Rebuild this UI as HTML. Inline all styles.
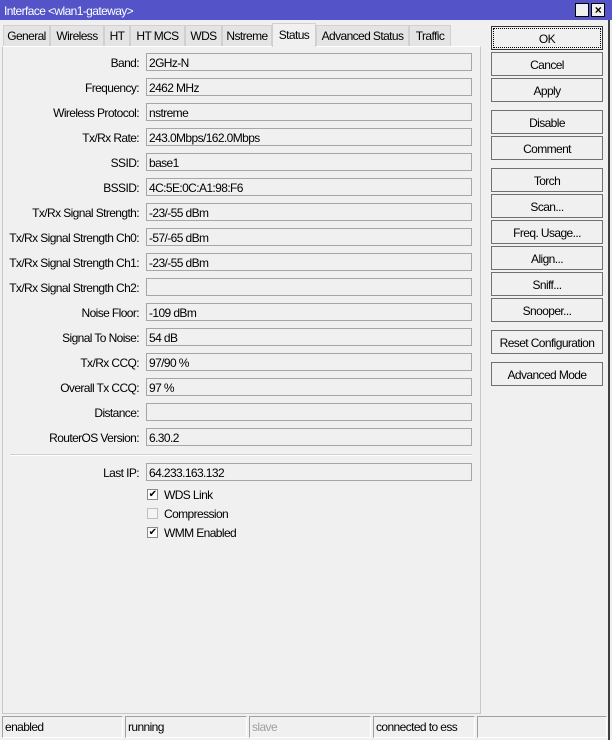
<!DOCTYPE html><html><head><style>
*{box-sizing:border-box;margin:0;padding:0}
body{width:612px;height:740px;background:#f0f0f0;font-family:"Liberation Sans",sans-serif;font-size:12px;color:#000;position:relative;overflow:hidden;letter-spacing:-0.6px}
.a{position:absolute;white-space:nowrap}
.title{left:0;top:0;width:612px;height:20px;background:#5454c8;color:#fff;padding:4px 0 0 4px;font-size:12px}
.tb{top:3px;width:14px;height:14px;background:#f0f0f0;border:1px solid #000}
.tab{top:25px;height:21px;border:1px solid #d0d0d0;border-bottom:none;background:#e4e4e4;text-align:center;padding-top:3px}
.panel{left:2px;top:46px;width:479px;height:668px;border:1px solid #c8c8c8;border-top:1px solid #fff;background:#f0f0f0}
.lbl{left:0;width:139px;text-align:right}
.fld{left:146px;width:326px;height:18px;border:1px solid #a6a6a6;padding:2px 0 0 2px}
.btn{left:491px;width:112px;height:24px;border:1px solid #707070;background:#f0f0f0;text-align:center;padding-top:5px}
.cb{left:147px;width:11px;height:11px;border:1px solid #8a8a8a;background:#fff;font-size:10px;line-height:9px;text-align:center}
.sb{top:716px;height:22px;border:1px solid #a0a0a0;border-right-color:#fff;border-bottom-color:#fff;padding:3px 0 0 2px}
</style></head><body>
<div class="a title">Interface &lt;wlan1-gateway&gt;</div>
<div class="a tb" style="left:575px"></div>
<div class="a tb" style="left:591px;font-size:12px;color:#000;text-align:center;line-height:12px;font-weight:bold">×</div>
<div class="a" style="left:608px;top:20px;width:2px;height:720px;background:#404040"></div>
<div class="a tab" style="left:3px;width:47px">General</div>
<div class="a tab" style="left:50px;width:54px">Wireless</div>
<div class="a tab" style="left:104px;width:26px">HT</div>
<div class="a tab" style="left:130px;width:55px">HT MCS</div>
<div class="a tab" style="left:185px;width:37px">WDS</div>
<div class="a tab" style="left:222px;width:50px">Nstreme</div>
<div class="a tab" style="left:272px;width:44px;top:23px;height:24px;background:#f0f0f0;z-index:2;padding-top:4px">Status</div>
<div class="a tab" style="left:316px;width:93px">Advanced Status</div>
<div class="a tab" style="left:409px;width:42px">Traffic</div>
<div class="a panel"></div>
<div class="a lbl" style="top:56px">Band:</div><div class="a fld" style="top:53px">2GHz-N</div>
<div class="a lbl" style="top:81px">Frequency:</div><div class="a fld" style="top:78px">2462 MHz</div>
<div class="a lbl" style="top:106px">Wireless Protocol:</div><div class="a fld" style="top:103px">nstreme</div>
<div class="a lbl" style="top:131px">Tx/Rx Rate:</div><div class="a fld" style="top:128px">243.0Mbps/162.0Mbps</div>
<div class="a lbl" style="top:156px">SSID:</div><div class="a fld" style="top:153px">base1</div>
<div class="a lbl" style="top:181px">BSSID:</div><div class="a fld" style="top:178px">4C:5E:0C:A1:98:F6</div>
<div class="a lbl" style="top:206px">Tx/Rx Signal Strength:</div><div class="a fld" style="top:203px">-23/-55 dBm</div>
<div class="a lbl" style="top:231px">Tx/Rx Signal Strength Ch0:</div><div class="a fld" style="top:228px">-57/-65 dBm</div>
<div class="a lbl" style="top:256px">Tx/Rx Signal Strength Ch1:</div><div class="a fld" style="top:253px">-23/-55 dBm</div>
<div class="a lbl" style="top:281px">Tx/Rx Signal Strength Ch2:</div><div class="a fld" style="top:278px"></div>
<div class="a lbl" style="top:306px">Noise Floor:</div><div class="a fld" style="top:303px">-109 dBm</div>
<div class="a lbl" style="top:331px">Signal To Noise:</div><div class="a fld" style="top:328px">54 dB</div>
<div class="a lbl" style="top:356px">Tx/Rx CCQ:</div><div class="a fld" style="top:353px">97/90 %</div>
<div class="a lbl" style="top:381px">Overall Tx CCQ:</div><div class="a fld" style="top:378px">97 %</div>
<div class="a lbl" style="top:406px">Distance:</div><div class="a fld" style="top:403px"></div>
<div class="a lbl" style="top:431px">RouterOS Version:</div><div class="a fld" style="top:428px">6.30.2</div>
<div class="a" style="left:10px;top:454px;width:462px;height:2px;border-top:1px solid #d0d0d0;border-bottom:1px solid #fff"></div>
<div class="a lbl" style="top:466px">Last IP:</div><div class="a fld" style="top:463px">64.233.163.132</div>
<div class="a cb" style="top:489px">✔</div><div class="a" style="left:164px;top:488px">WDS Link</div>
<div class="a cb" style="top:508px;background:#f4f4f4;border-color:#c0c0c0"></div><div class="a" style="left:164px;top:507px">Compression</div>
<div class="a cb" style="top:527px">✔</div><div class="a" style="left:164px;top:526px">WMM Enabled</div>
<div class="a btn" style="top:26px;outline:1px dotted #000;outline-offset:-3px;border-color:#333">OK</div>
<div class="a btn" style="top:52px">Cancel</div>
<div class="a btn" style="top:78px">Apply</div>
<div class="a btn" style="top:110px">Disable</div>
<div class="a btn" style="top:136px">Comment</div>
<div class="a btn" style="top:168px">Torch</div>
<div class="a btn" style="top:194px">Scan...</div>
<div class="a btn" style="top:220px">Freq. Usage...</div>
<div class="a btn" style="top:246px">Align...</div>
<div class="a btn" style="top:272px">Sniff...</div>
<div class="a btn" style="top:298px">Snooper...</div>
<div class="a btn" style="top:330px">Reset Configuration</div>
<div class="a btn" style="top:362px">Advanced Mode</div>
<div class="a sb" style="left:2px;width:121px">enabled</div>
<div class="a sb" style="left:125px;width:122px">running</div>
<div class="a sb" style="left:249px;width:122px;color:#a0a0a0">slave</div>
<div class="a sb" style="left:373px;width:102px">connected to ess</div>
<div class="a sb" style="left:477px;width:130px"></div>
</body></html>
